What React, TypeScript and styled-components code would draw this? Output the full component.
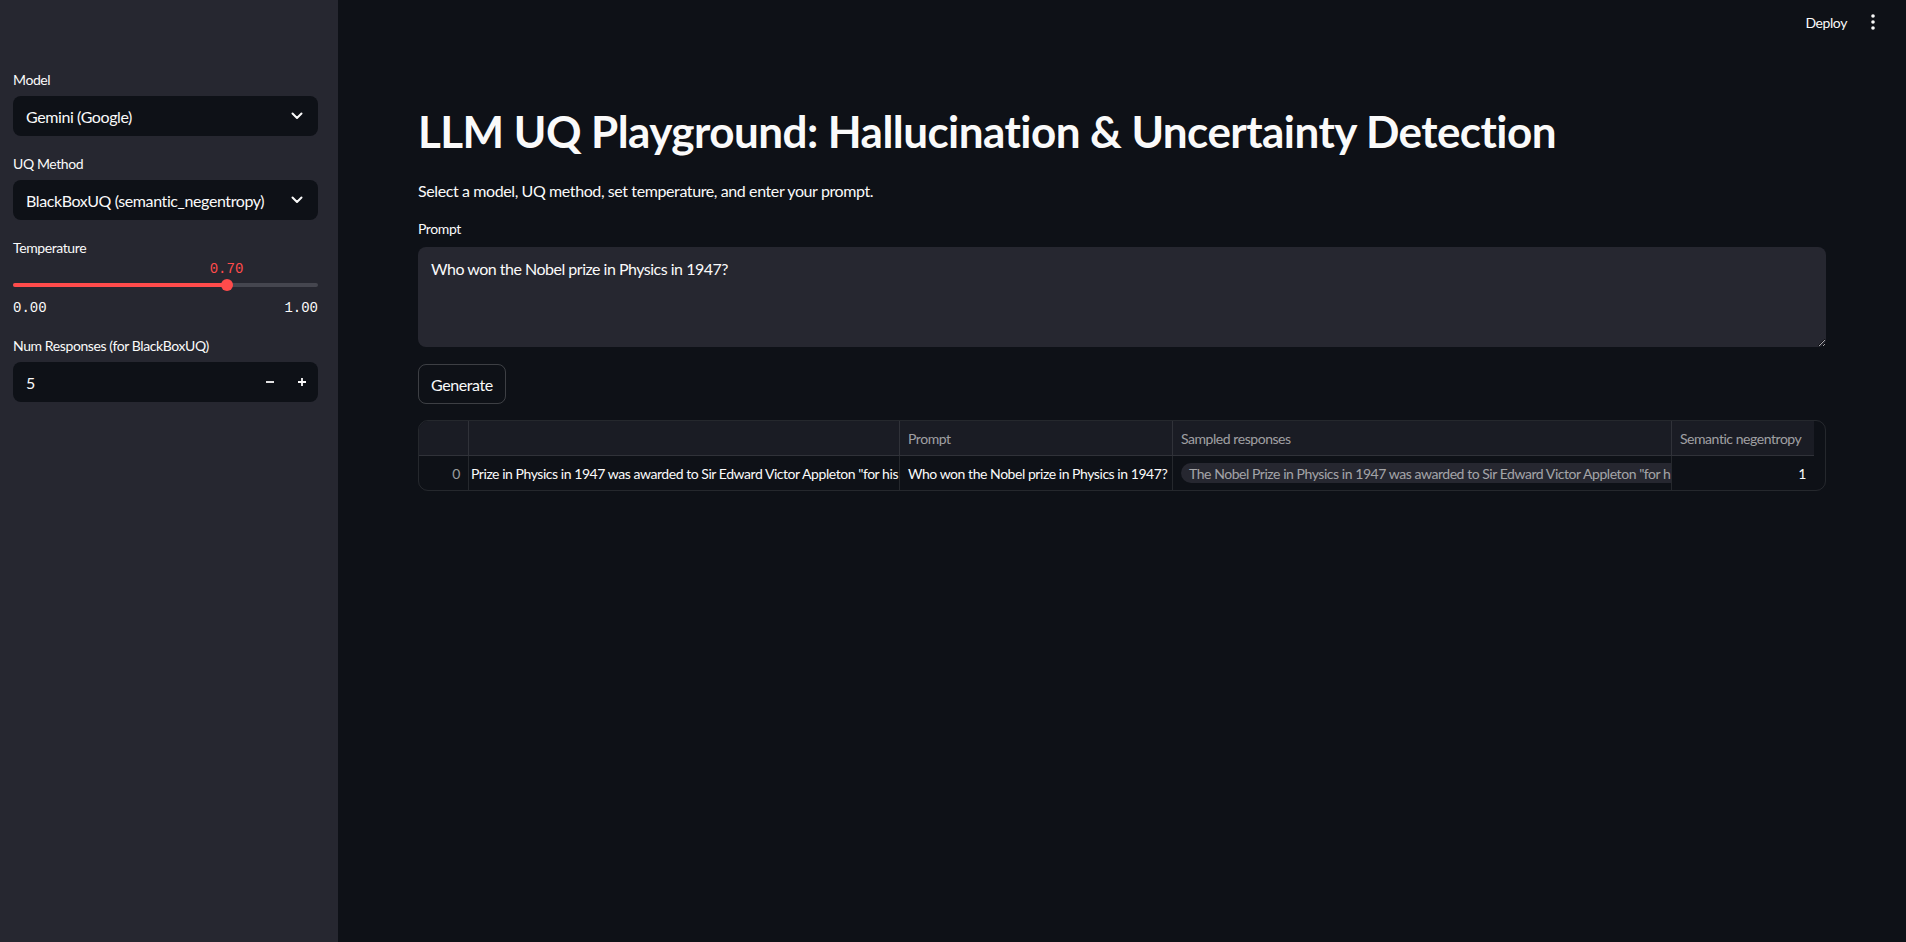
import React from "react";
import styled, { createGlobalStyle } from "styled-components";

const FONT = `Lato, "Noto Sans", sans-serif`;
const MONO = `"Liberation Mono", "DejaVu Sans Mono", monospace`;

const GlobalStyle = createGlobalStyle`
  html, body { margin: 0; padding: 0; background: #0e1117; }
  body { font-family: ${FONT}; color: #fafafa; letter-spacing: -0.4px; -webkit-font-smoothing: antialiased; }
  * { box-sizing: border-box; }
`;

const Shell = styled.div`
  display: grid;
  grid-template-columns: 338px 1fr;
  width: 1906px;
  height: 942px;
  overflow: hidden;
`;

const Sidebar = styled.aside`
  background: #262730;
  padding: 68px 20px 0 13px;
  display: flex;
  flex-direction: column;
  gap: 16px;
`;

const Field = styled.div`
  display: flex;
  flex-direction: column;
`;

const Label = styled.div<{ $gap?: number }>`
  font-size: 14px;
  line-height: 24px;
  height: 24px;
  margin-bottom: ${(p) => p.$gap ?? 4}px;
  color: #fafafa;
`;

const SelectBox = styled.div`
  height: 40px;
  background: #0e1117;
  border-radius: 8px;
  display: flex;
  align-items: center;
  justify-content: space-between;
  padding: 0 15px 0 13px;
  font-size: 16px;
`;

const SliderBody = styled.div`
  display: flex;
  flex-direction: column;
`;

const TrackZone = styled.div`
  position: relative;
  height: 30px;
`;

const Track = styled.div`
  position: absolute;
  left: 0;
  right: 0;
  top: 19px;
  height: 4px;
  border-radius: 2px;
  background: #45464f;
  overflow: hidden;
`;

const TrackFill = styled.div`
  height: 100%;
  background: #ff4b4b;
`;

const Thumb = styled.div`
  position: absolute;
  top: 15px;
  width: 12px;
  height: 12px;
  margin-left: -6px;
  border-radius: 50%;
  background: #ff4b4b;
`;

const ThumbValue = styled.div`
  position: absolute;
  top: -3px;
  transform: translateX(-50%);
  font-family: ${MONO};
  letter-spacing: 0;
  font-size: 14px;
  line-height: 16px;
  color: #ff4b4b;
`;

const Ticks = styled.div`
  display: flex;
  justify-content: space-between;
  padding-top: 6px;
  height: 24px;
  font-family: ${MONO};
  letter-spacing: 0;
  font-size: 14px;
  line-height: 16px;
  color: #fafafa;
`;

const NumberBox = styled.div`
  height: 40px;
  background: #0e1117;
  border-radius: 8px;
  display: flex;
  align-items: center;
  padding-left: 13px;
  font-size: 16px;
`;

const NumberValue = styled.div`
  flex: 1;
`;

const StepButton = styled.div`
  width: 32px;
  height: 40px;
  display: flex;
  align-items: center;
  justify-content: center;
`;

const Main = styled.main`
  display: flex;
  flex-direction: column;
  min-width: 0;
`;

const TopBar = styled.header`
  height: 44px;
  display: flex;
  align-items: center;
  justify-content: flex-end;
  gap: 24px;
  padding-right: 31px;
`;

const DeployText = styled.span`
  font-size: 14px;
  color: #fafafa;
`;

const Content = styled.div`
  padding: 61px 80px 0 80px;
  display: flex;
  flex-direction: column;
`;

const Title = styled.h1`
  margin: 0;
  font-size: 44px;
  line-height: 53px;
  font-weight: 700;
  letter-spacing: -0.55px;
  color: #fafafa;
`;

const Lead = styled.p`
  margin: 21px 0 14px 0;
  font-size: 16px;
  line-height: 24px;
`;

const PromptArea = styled.textarea`
  display: block;
  width: 100%;
  height: 100px;
  background: #262730;
  border: none;
  border-radius: 8px;
  color: #fafafa;
  font-family: ${FONT};
  letter-spacing: -0.5px;
  font-size: 16px;
  line-height: 24px;
  padding: 10px 13px;
  outline: none;
  resize: vertical;
  color-scheme: dark;
`;

const GenerateButton = styled.button`
  align-self: flex-start;
  margin-top: 17px;
  height: 40px;
  padding: 0 12px;
  background: transparent;
  border: 1px solid rgba(250, 250, 250, 0.2);
  border-radius: 8px;
  color: #fafafa;
  font-family: ${FONT};
  letter-spacing: -0.4px;
  font-size: 16px;
`;

const Table = styled.div`
  margin-top: 16px;
  border: 1px solid rgba(250, 250, 250, 0.1);
  border-radius: 10px;
  overflow: hidden;
`;

const GridRow = styled.div`
  display: grid;
  grid-template-columns: 50px 431px 273px 499px 142px 1fr;
`;

const Cell = styled.div<{
  $head?: boolean;
  $align?: "left" | "right";
  $muted?: boolean;
  $edge?: boolean;
  $blank?: boolean;
  $tight?: boolean;
}>`
  height: ${(p) => (p.$head ? 35 : 34)}px;
  display: flex;
  align-items: center;
  justify-content: ${(p) => (p.$align === "right" ? "flex-end" : "flex-start")};
  padding: 0 8px 0 ${(p) => (p.$tight ? 2 : 8)}px;
  overflow: hidden;
  white-space: nowrap;
  font-size: 14px;
  letter-spacing: -0.45px;
  color: ${(p) => (p.$muted ? "rgba(250,250,250,0.6)" : "#fafafa")};
  background: ${(p) => (p.$head && !p.$blank ? "#1a1c24" : "transparent")};
  border-right: ${(p) => (p.$edge ? "1px solid rgba(250,250,250,0.1)" : "none")};
  border-bottom: ${(p) => (p.$head && !p.$blank ? "1px solid rgba(250,250,250,0.1)" : "none")};
`;

const Chip = styled.span`
  display: inline-flex;
  align-items: center;
  height: 20px;
  padding: 0 8px;
  border-radius: 10px;
  background: #262730;
  color: rgba(250, 250, 250, 0.6);
  font-size: 14px;
  white-space: nowrap;
`;

const Chevron = () => (
  <svg width="12" height="8" viewBox="0 0 12 8" fill="none">
    <path d="M1.5 1.5L6 6L10.5 1.5" stroke="#fafafa" strokeWidth="2" strokeLinecap="round" strokeLinejoin="round" />
  </svg>
);

const Minus = () => (
  <svg width="10" height="10" viewBox="0 0 10 10">
    <path d="M1 5H9" stroke="#fafafa" strokeWidth="1.8" />
  </svg>
);

const Plus = () => (
  <svg width="10" height="10" viewBox="0 0 10 10">
    <path d="M1 5H9M5 1V9" stroke="#fafafa" strokeWidth="1.8" />
  </svg>
);

const Kebab = () => (
  <svg width="4" height="16" viewBox="0 0 4 16">
    <circle cx="2" cy="2" r="1.8" fill="#fafafa" />
    <circle cx="2" cy="8" r="1.8" fill="#fafafa" />
    <circle cx="2" cy="14" r="1.8" fill="#fafafa" />
  </svg>
);

const temperature = 0.7;

export default function App() {
  return (
    <>
      <GlobalStyle />
      <Shell>
        <Sidebar>
          <Field>
            <Label>Model</Label>
            <SelectBox>
              <span>Gemini (Google)</span>
              <Chevron />
            </SelectBox>
          </Field>
          <Field>
            <Label>UQ Method</Label>
            <SelectBox>
              <span>BlackBoxUQ (semantic_negentropy)</span>
              <Chevron />
            </SelectBox>
          </Field>
          <Field>
            <Label>Temperature</Label>
            <SliderBody>
              <TrackZone>
                <ThumbValue style={{ left: `${temperature * 100}%` }}>0.70</ThumbValue>
                <Track>
                  <TrackFill style={{ width: `${temperature * 100}%` }} />
                </Track>
                <Thumb style={{ left: `${temperature * 100}%` }} />
              </TrackZone>
              <Ticks>
                <span>0.00</span>
                <span>1.00</span>
              </Ticks>
            </SliderBody>
          </Field>
          <Field>
            <Label>Num Responses (for BlackBoxUQ)</Label>
            <NumberBox>
              <NumberValue>5</NumberValue>
              <StepButton>
                <Minus />
              </StepButton>
              <StepButton>
                <Plus />
              </StepButton>
            </NumberBox>
          </Field>
        </Sidebar>
        <Main>
          <TopBar>
            <DeployText>Deploy</DeployText>
            <Kebab />
          </TopBar>
          <Content>
            <Title>LLM UQ Playground: Hallucination &amp; Uncertainty Detection</Title>
            <Lead>Select a model, UQ method, set temperature, and enter your prompt.</Lead>
            <Label $gap={6}>Prompt</Label>
            <PromptArea defaultValue="Who won the Nobel prize in Physics in 1947?" />
            <GenerateButton>Generate</GenerateButton>
            <Table>
              <GridRow>
                <Cell $head $edge />
                <Cell $head $edge />
                <Cell $head $edge $muted>Prompt</Cell>
                <Cell $head $edge $muted>Sampled responses</Cell>
                <Cell $head $muted>Semantic negentropy</Cell>
                <Cell $head $blank />
              </GridRow>
              <GridRow>
                <Cell $edge $align="right" $muted>0</Cell>
                <Cell $edge $tight>Prize in Physics in 1947 was awarded to Sir Edward Victor Appleton "for his work on the physics of the upper atmosphere"</Cell>
                <Cell $edge>Who won the Nobel prize in Physics in 1947?</Cell>
                <Cell $edge>
                  <Chip>The Nobel Prize in Physics in 1947 was awarded to Sir Edward Victor Appleton "for his investigations of the physics of the upper atmosphere"</Chip>
                </Cell>
                <Cell $align="right">1</Cell>
                <Cell />
              </GridRow>
            </Table>
          </Content>
        </Main>
      </Shell>
    </>
  );
}
